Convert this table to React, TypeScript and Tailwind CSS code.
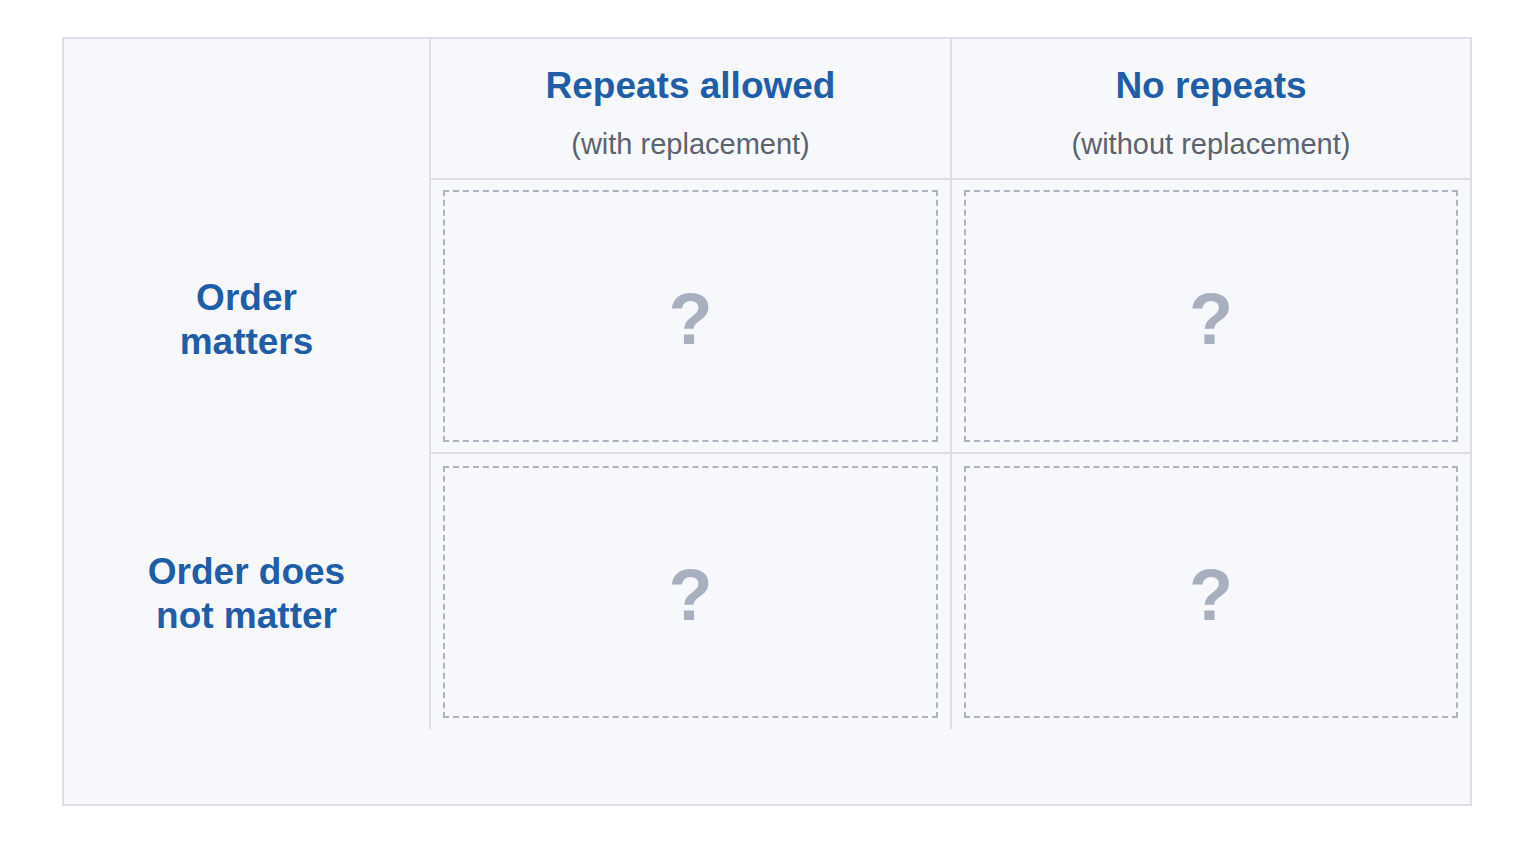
import React from "react";

const font = { fontFamily: '"Liberation Sans", Arial, sans-serif' };

function Cell({ last }: { last?: boolean }) {
  return (
    <div className={`flex items-center justify-center border-l-2 border-[#dcdfe6] px-[12px] ${last ? "" : "border-b-2"}`}>
      <div className="flex h-[252px] w-full items-center justify-center border-2 border-dashed border-[#adb3c2] pt-[6px]">
        <span className="text-[72px] font-bold leading-none text-[#a8b0c0]">?</span>
      </div>
    </div>
  );
}

function Label({ lines }: { lines: string[] }) {
  return (
    <div className="flex items-center justify-center pt-[5px]">
      <div className="text-center text-[37px] font-bold leading-[44px] text-[#1e5ea8]">
        {lines.map((l) => (
          <div key={l}>{l}</div>
        ))}
      </div>
    </div>
  );
}

export default function App() {
  return (
    <div className="min-h-screen bg-white pt-[37px] pl-[62px]" style={font}>
      <div className="w-[1410px] h-[769px] border-2 border-[#dcdfe6] bg-[#f7f8fc]">
        <div className="grid grid-cols-[365px_521px_520px] grid-rows-[141px_274px_275px]">
          <div />
          <div className="flex flex-col items-center border-l-2 border-b-2 border-[#dcdfe6] pt-[23px]">
            <div className="text-[37px] font-bold leading-[48px] text-[#1e5ea8]">Repeats allowed</div>
            <div className="mt-[17px] text-[29px] leading-[34px] text-[#5b6370]">(with replacement)</div>
          </div>
          <div className="flex flex-col items-center border-l-2 border-b-2 border-[#dcdfe6] pt-[23px]">
            <div className="text-[37px] font-bold leading-[48px] text-[#1e5ea8]">No repeats</div>
            <div className="mt-[17px] text-[29px] leading-[34px] text-[#5b6370]">(without replacement)</div>
          </div>
          <Label lines={["Order", "matters"]} />
          <Cell />
          <Cell />
          <Label lines={["Order does", "not matter"]} />
          <Cell last />
          <Cell last />
        </div>
      </div>
    </div>
  );
}
